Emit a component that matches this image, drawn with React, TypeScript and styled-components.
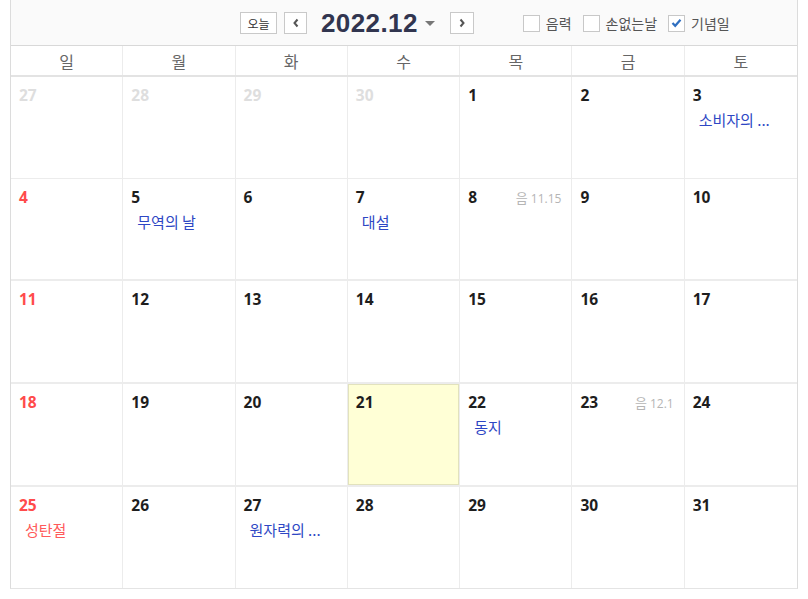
import React from "react";
import styled, { createGlobalStyle } from "styled-components";

const Global = createGlobalStyle`
  html, body { margin: 0; padding: 0; background: #fff; }
  body { font-family: "Open Sans", "Noto Sans CJK KR", sans-serif; }
`;

const KR = `"Noto Sans CJK KR", "Open Sans", sans-serif`;

const Wrap = styled.div`
  margin-left: 10px;
  width: 786px;
  border-left: 1px solid #dcdcdc;
  border-right: 1px solid #dcdcdc;
  border-bottom: 1px solid #e4e4e4;
`;

const Toolbar = styled.div`
  height: 46px;
  background: #fafafa;
  border-bottom: 1px solid #d8d8d8;
  display: flex;
  align-items: center;
  padding-left: 229px;
  padding-top: 1px;
  box-sizing: border-box;
`;

const SmallBtn = styled.button<{ $w: number }>`
  width: ${(p) => p.$w}px;
  height: 22px;
  margin: 0;
  padding: 0;
  border: 1px solid #c9c9c9;
  background: #fff;
  font-family: ${KR};
  font-size: 12px;
  color: #333;
  display: flex;
  align-items: center;
  justify-content: center;
  box-sizing: border-box;
`;

const Title = styled.div`
  font-family: "Liberation Sans", Arial, sans-serif;
  font-weight: bold;
  font-size: 26px;
  color: #31354f;
  letter-spacing: 0.4px;
  margin-left: 14px;
  line-height: 1;
`;

const Caret = styled.span`
  width: 0;
  height: 0;
  border-left: 5px solid transparent;
  border-right: 5px solid transparent;
  border-top: 5px solid #777;
  margin-left: 7px;
  margin-right: 15px;
`;

const Checks = styled.div`
  display: flex;
  align-items: center;
  margin-left: 49px;
  gap: 11px;
`;

const CheckItem = styled.label`
  display: flex;
  align-items: center;
  gap: 6px;
  font-family: ${KR};
  font-size: 14px;
  color: #555;
`;

const Box = styled.span`
  width: 15px;
  height: 15px;
  border: 1px solid #c8c8c8;
  background: #fff;
  display: flex;
  align-items: center;
  justify-content: center;
`;

const Grid = styled.div`
  display: grid;
  grid-template-columns: repeat(7, 1fr);
`;

const WeekHead = styled(Grid)`
  height: 29px;
  border-bottom: 2px solid #e3e3e3;
  background: #fff;
`;

const DayName = styled.div<{ $last?: boolean }>`
  display: flex;
  align-items: center;
  justify-content: center;
  font-family: ${KR};
  font-size: 16px;
  color: #666;
  border-right: ${(p) => (p.$last ? "none" : "1px solid #ececec")};
`;

const Week = styled(Grid)<{ $h: number; $b: number }>`
  height: ${(p) => p.$h}px;
  border-bottom: ${(p) => p.$b}px solid #ececec;
`;

const Cell = styled.div<{ $last?: boolean; $today?: boolean }>`
  position: relative;
  box-sizing: border-box;
  padding: 8px 10px 0 8px;
  border-right: ${(p) => (p.$last ? "none" : "1px solid #ececec")};
  background: ${(p) => (p.$today ? "#ffffd6" : "#fff")};
  box-shadow: ${(p) => (p.$today ? "inset 0 0 0 1px #e2e2bd" : "none")};
`;

const DateRow = styled.div`
  display: flex;
  justify-content: space-between;
  align-items: center;
  height: 20px;
`;

const Num = styled.span<{ $tone: "normal" | "red" | "dim" }>`
  font-family: "Open Sans", sans-serif;
  font-weight: 700;
  font-size: 15.5px;
  color: ${(p) => (p.$tone === "red" ? "#ff4b4b" : p.$tone === "dim" ? "#dedede" : "#1e1e1e")};
`;

const Lunar = styled.span`
  color: #b5b5b5;
  font-size: 12px;
  font-family: "Open Sans", sans-serif;
  display: flex;
  align-items: baseline;
  gap: 3px;
`;

const LunarKo = styled.span`
  font-family: ${KR};
  font-size: 13px;
`;

const Event = styled.div<{ $red?: boolean }>`
  margin-top: 6px;
  padding-left: 6px;
  font-family: ${KR};
  font-size: 15px;
  line-height: 18px;
  color: ${(p) => (p.$red ? "#ff5a5a" : "#2e47c4")};
  white-space: nowrap;
`;

type Day = {
  n: number;
  dim?: boolean;
  event?: string;
  red?: boolean;
  lunar?: string;
  today?: boolean;
};

const weeks: Day[][] = [
  [
    { n: 27, dim: true },
    { n: 28, dim: true },
    { n: 29, dim: true },
    { n: 30, dim: true },
    { n: 1 },
    { n: 2 },
    { n: 3, event: "소비자의 ..." },
  ],
  [
    { n: 4 },
    { n: 5, event: "무역의 날" },
    { n: 6 },
    { n: 7, event: "대설" },
    { n: 8, lunar: "11.15" },
    { n: 9 },
    { n: 10 },
  ],
  [{ n: 11 }, { n: 12 }, { n: 13 }, { n: 14 }, { n: 15 }, { n: 16 }, { n: 17 }],
  [
    { n: 18 },
    { n: 19 },
    { n: 20 },
    { n: 21, today: true },
    { n: 22, event: "동지" },
    { n: 23, lunar: "12.1" },
    { n: 24 },
  ],
  [
    { n: 25, event: "성탄절", red: true },
    { n: 26 },
    { n: 27, event: "원자력의 ..." },
    { n: 28 },
    { n: 29 },
    { n: 30 },
    { n: 31 },
  ],
];

const rowDims = [
  { h: 101, b: 1 },
  { h: 100, b: 2 },
  { h: 101, b: 2 },
  { h: 101, b: 2 },
  { h: 101, b: 0 },
];

const dayNames = ["일", "월", "화", "수", "목", "금", "토"];

const ChevronLeft = () => (
  <svg width="8" height="10" viewBox="0 0 8 10">
    <path d="M5.5 1.5 L2.5 5 L5.5 8.5" fill="none" stroke="#555" strokeWidth="2" />
  </svg>
);
const ChevronRight = () => (
  <svg width="8" height="10" viewBox="0 0 8 10">
    <path d="M2.5 1.5 L5.5 5 L2.5 8.5" fill="none" stroke="#555" strokeWidth="2" />
  </svg>
);
const Tick = () => (
  <svg width="11" height="10" viewBox="0 0 11 10">
    <path d="M1.5 5 L4.2 7.8 L9.5 1.8" fill="none" stroke="#2f6fc0" strokeWidth="2.2" />
  </svg>
);

export default function App() {
  return (
    <>
      <Global />
      <Wrap>
        <Toolbar>
          <SmallBtn $w={37}>오늘</SmallBtn>
          <SmallBtn $w={23} style={{ marginLeft: 7 }}>
            <ChevronLeft />
          </SmallBtn>
          <Title>2022.12</Title>
          <Caret />
          <SmallBtn $w={24}>
            <ChevronRight />
          </SmallBtn>
          <Checks>
            <CheckItem>
              <Box />
              음력
            </CheckItem>
            <CheckItem>
              <Box />
              손없는날
            </CheckItem>
            <CheckItem>
              <Box>
                <Tick />
              </Box>
              기념일
            </CheckItem>
          </Checks>
        </Toolbar>
        <WeekHead>
          {dayNames.map((d, i) => (
            <DayName key={d} $last={i === 6}>
              {d}
            </DayName>
          ))}
        </WeekHead>
        {weeks.map((w, wi) => (
          <Week key={wi} $h={rowDims[wi].h} $b={rowDims[wi].b}>
            {w.map((d, di) => (
              <Cell key={di} $last={di === 6} $today={d.today}>
                <DateRow>
                  <Num $tone={d.dim ? "dim" : di === 0 ? "red" : "normal"}>{d.n}</Num>
                  {d.lunar && (
                    <Lunar>
                      <LunarKo>음</LunarKo>
                      {d.lunar}
                    </Lunar>
                  )}
                </DateRow>
                {d.event && <Event $red={d.red}>{d.event}</Event>}
              </Cell>
            ))}
          </Week>
        ))}
      </Wrap>
    </>
  );
}
